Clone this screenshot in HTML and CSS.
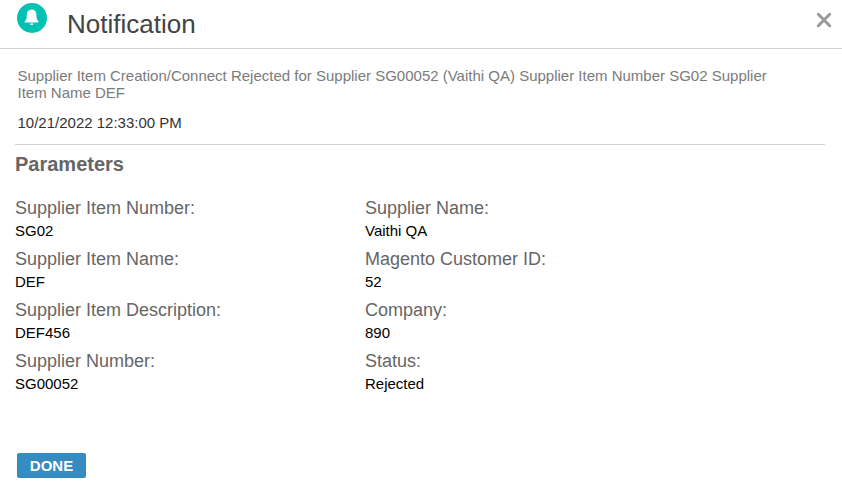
FILE: index.html
```html
<!DOCTYPE html>
<html lang="en">
<head>
<meta charset="utf-8">
<title>Notification</title>
<link rel="stylesheet" href="styles.css">
</head>
<body>
<header class="head">
  <svg class="bell" viewBox="0 0 30 30" width="30" height="30"><circle cx="15" cy="15" r="15" fill="#00c1b2"/><path fill="#fff" d="M14.600 6.500c3 0 4.700 2.200 4.800 5.100.1 3.600.4 5.600 2.100 7v.9H7.700v-.9c1.700-1.400 2-3.400 2.100-7 .1-2.900 1.800-5.100 4.800-5.100zM12.800 20.600h3.600c-.2 1.100-.9 1.700-1.800 1.700s-1.600-.6-1.800-1.700z"/></svg>
  <h1>Notification</h1>
  <svg class="close" viewBox="0 0 16 16" width="16" height="16"><path d="M2.300 2.300l11.400 11.400M13.700 2.300L2.300 13.700" stroke="#999" stroke-width="3" stroke-linecap="round"/></svg>
</header>
<main>
  <section class="message">
    <p class="text">Supplier Item Creation/Connect Rejected for Supplier SG00052 (Vaithi QA) Supplier Item Number SG02 Supplier Item Name DEF</p>
    <p class="date">10/21/2022 12:33:00 PM</p>
  </section>
  <h2>Parameters</h2>
  <dl class="params">
    <div><dt>Supplier Item Number:</dt><dd>SG02</dd></div>
    <div><dt>Supplier Name:</dt><dd>Vaithi QA</dd></div>
    <div><dt>Supplier Item Name:</dt><dd>DEF</dd></div>
    <div><dt>Magento Customer ID:</dt><dd>52</dd></div>
    <div><dt>Supplier Item Description:</dt><dd>DEF456</dd></div>
    <div><dt>Company:</dt><dd>890</dd></div>
    <div><dt>Supplier Number:</dt><dd>SG00052</dd></div>
    <div><dt>Status:</dt><dd>Rejected</dd></div>
  </dl>
  <button class="done" type="button">DONE</button>
</main>
</body>
</html>
```
FILE: styles.css
```css
* { box-sizing: border-box; }
body { margin: 0; background: #fff; font-family: "Liberation Sans", Arial, sans-serif; }
h1, h2, p, dl, dd { margin: 0; }
.head { display: flex; height: 49px; padding: 3px 10px 0 17px; border-bottom: 1px solid #d4d4d4; }
.bell { flex: none; }
h1 { flex: 1; margin: 6px 0 0 20px; font-size: 26px; line-height: 30px; font-weight: 400; color: #444; }
.close { flex: none; margin-top: 9px; }
main { padding: 0 17px 0 15px; }
.message { padding: 18px 50px 13px 2.500px; height: 96px; border-bottom: 1px solid #d4d4d4; font-size: 15px; line-height: 17px; }
.text { color: #7b7b7b; }
.date { margin-top: 13px; color: #333; }
h2 { margin-top: 7px; font-size: 20px; line-height: 24px; color: #666; }
.params { display: grid; grid-template-columns: 350px 350px; grid-auto-rows: 51px; margin-top: 21px; }
dt { font-size: 18px; line-height: 22px; color: #666; }
dd { margin-top: 3px; font-size: 15px; line-height: 17px; color: #000; }
.done { display: block; width: 69px; height: 25px; margin: 52px 0 0 2px; padding: 0; border: 0; border-radius: 2px; background: #368bc1; color: #fff; font: bold 15px/25px "Liberation Sans", Arial, sans-serif; }
```
